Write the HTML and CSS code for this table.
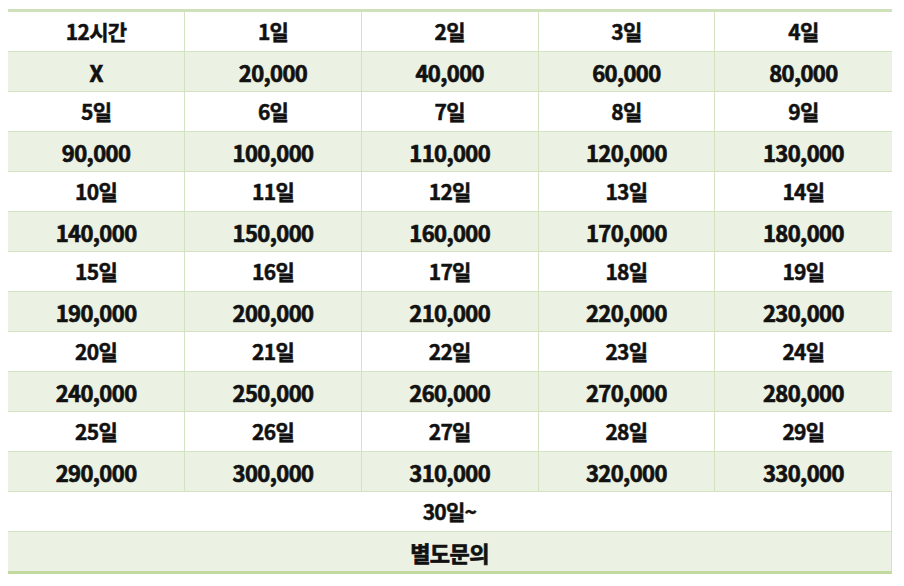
FILE: index.html
```html
<!DOCTYPE html>
<html lang="ko">
<head>
<meta charset="utf-8">
<link rel="stylesheet" href="styles.css">
</head>
<body>
<table class="price">
<tbody>
<tr class="day"><td>12시간</td><td>1일</td><td>2일</td><td>3일</td><td>4일</td></tr>
<tr class="cost"><td>X</td><td>20,000</td><td>40,000</td><td>60,000</td><td>80,000</td></tr>
<tr class="day"><td>5일</td><td>6일</td><td>7일</td><td>8일</td><td>9일</td></tr>
<tr class="cost"><td>90,000</td><td>100,000</td><td>110,000</td><td>120,000</td><td>130,000</td></tr>
<tr class="day"><td>10일</td><td>11일</td><td>12일</td><td>13일</td><td>14일</td></tr>
<tr class="cost"><td>140,000</td><td>150,000</td><td>160,000</td><td>170,000</td><td>180,000</td></tr>
<tr class="day"><td>15일</td><td>16일</td><td>17일</td><td>18일</td><td>19일</td></tr>
<tr class="cost"><td>190,000</td><td>200,000</td><td>210,000</td><td>220,000</td><td>230,000</td></tr>
<tr class="day"><td>20일</td><td>21일</td><td>22일</td><td>23일</td><td>24일</td></tr>
<tr class="cost"><td>240,000</td><td>250,000</td><td>260,000</td><td>270,000</td><td>280,000</td></tr>
<tr class="day"><td>25일</td><td>26일</td><td>27일</td><td>28일</td><td>29일</td></tr>
<tr class="cost"><td>290,000</td><td>300,000</td><td>310,000</td><td>320,000</td><td>330,000</td></tr>
<tr class="day wide"><td colspan="5">30일~</td></tr>
<tr class="cost wide"><td colspan="5">별도문의</td></tr>
</tbody>
</table>
</body>
</html>
```
FILE: styles.css
```css
html, body {
  margin: 0;
  padding: 0;
  background: #ffffff;
}
body {
  padding: 9px 12px 0 8px;
}
.price {
  width: 884px;
  border-collapse: collapse;
  table-layout: fixed;
  border-top: 3px solid #cfe1b9;
  border-bottom: 3px solid #c3da9f;
  font-family: "Noto Sans CJK KR", "Noto Sans", sans-serif;
  font-weight: 700;
  font-size: 21px;
  color: #111111;
}
.price td {
  height: 39px;
  padding: 0;
  text-align: center;
  vertical-align: middle;
  line-height: 1;
  border-top: 1px solid #d3e3c2;
  border-left: 1px solid #d3e3c2;
  letter-spacing: -0.7px;
  -webkit-text-stroke: 0.5px #111111;
}
.price tr:first-child td {
  border-top: none;
}
.price td:first-child {
  border-left: none;
}
.cost td {
  background: #ecf2e3;
  font-size: 22px;
  letter-spacing: -0.6px;
  -webkit-text-stroke: 0.7px #111111;
}
.wide td {
  border-right: 1px solid #d8dcd3;
}
```
